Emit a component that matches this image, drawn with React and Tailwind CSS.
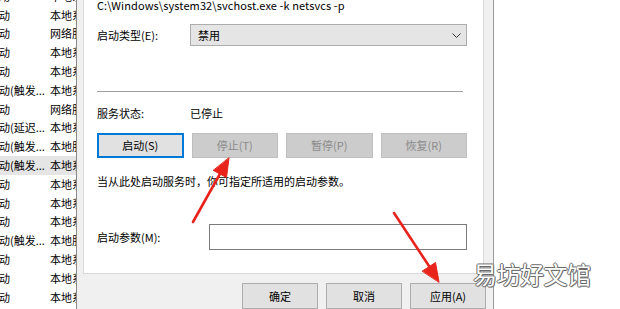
import React from "react";

const rows = [
  ["动", "本地系统"],
  ["动", "本地系统"],
  ["动", "网络服务"],
  ["动", "本地系统"],
  ["动", "本地系统"],
  ["动(触发...", "本地系统"],
  ["动", "网络服务"],
  ["动(延迟...", "本地系统"],
  ["动(触发...", "本地服务"],
  ["动(触发...", "本地系统", true],
  ["动", "本地系统"],
  ["动", "本地系统"],
  ["动", "本地系统"],
  ["动(触发...", "本地服务"],
  ["动", "本地系统"],
  ["动", "本地系统"],
  ["动", "本地系统"],
];

const ServiceList = () => (
  <div className="w-[77px] shrink-0 h-full overflow-hidden border-r border-[#8a8a8a] bg-white">
    <div className="-mt-[13px]">
      {rows.map(([start, account, active], i) => (
        <div
          key={i}
          className={`flex items-center h-[18.8px] text-[11px] leading-none text-black whitespace-nowrap ${
            active ? "bg-[#e5e5e5]" : ""
          }`}
        >
          <span className="w-[51px] shrink-0 -ml-[1px]">{start}</span>
          <span>{account}</span>
        </div>
      ))}
    </div>
  </div>
);

const Chevron = () => (
  <svg width="9" height="5" viewBox="0 0 9 5" className="text-[#333]">
    <path d="M0.5 0.5 L4.5 4.5 L8.5 0.5" fill="none" stroke="currentColor" strokeWidth="1" />
  </svg>
);

const ActionButton = ({ label, primary }) => (
  <div
    className={`h-[25px] flex items-center justify-center text-[11px] ${
      primary
        ? "bg-[#e1e1e1] border-2 border-[#0078d7] text-black"
        : "bg-[#cccccc] border border-[#bfbfbf] text-[#8a8a8a]"
    }`}
  >
    {label}
  </div>
);

const FooterButton = ({ label }) => (
  <div className="w-[76px] h-[26px] flex items-center justify-center bg-[#e1e1e1] border border-[#adadad] text-[11px] text-black">
    {label}
  </div>
);

const Arrows = () => (
  <svg className="absolute inset-0 pointer-events-none" width="620" height="309" viewBox="0 0 620 309">
    <g fill="#e8231b" stroke="#e8231b" strokeLinecap="round">
      <line x1="193" y1="222" x2="221" y2="172" strokeWidth="2.6" />
      <polygon points="229,158 226.5,177.5 213.5,170.5" strokeWidth="1" />
      <line x1="394" y1="213" x2="429" y2="266" strokeWidth="2.6" />
      <polygon points="439,282 435.5,262.5 422.5,271" strokeWidth="1" />
    </g>
  </svg>
);

export default function App() {
  return (
    <div className="relative w-[620px] h-[309px] overflow-hidden flex bg-white font-['Noto_Sans_CJK_SC','Noto_Sans',sans-serif] text-black">
      <ServiceList />

      {/* 属性对话框 */}
      <div className="w-[417px] shrink-0 h-full bg-[#f0f0f0] border-r border-[#9a9a9a] flex flex-col">
        <div className="ml-[6px] w-[401px] h-[274px] bg-white border border-[#d9d9d9] border-t-0 pl-[13px] pr-[16px] flex flex-col text-[11px]">
          <div className="-mt-[3px] h-[16px] leading-[16px] whitespace-nowrap tracking-[0.1px]">
            C:\Windows\system32\svchost.exe -k netsvcs -p
          </div>

          <div className="mt-[11px] flex items-center">
            <span className="w-[93px] shrink-0">启动类型(E):</span>
            <div className="flex-1 h-[22px] bg-[#e5e5e5] border border-[#adadad] flex items-center justify-between pl-[7px] pr-[5px]">
              <span>禁用</span>
              <Chevron />
            </div>
          </div>

          <div className="mt-[45px] h-px bg-[#a0a0a0] mr-[4px]" />

          <div className="mt-[13px] flex items-center h-[16px]">
            <span className="w-[93px] shrink-0">服务状态:</span>
            <span>已停止</span>
          </div>

          <div className="mt-[12px] grid grid-cols-4 gap-[8px]">
            <ActionButton label="启动(S)" primary />
            <ActionButton label="停止(T)" />
            <ActionButton label="暂停(P)" />
            <ActionButton label="恢复(R)" />
          </div>

          <div className="mt-[15px] h-[16px] leading-[16px]">当从此处启动服务时，你可指定所适用的启动参数。</div>

          <div className="mt-[35px] flex items-center">
            <span className="w-[112px] shrink-0">启动参数(M):</span>
            <div className="flex-1 h-[26px] bg-white border border-[#7a7a7a]" />
          </div>
        </div>

        <div className="mt-[9px] flex justify-end gap-[8px] pr-[7px]">
          <FooterButton label="确定" />
          <FooterButton label="取消" />
          <FooterButton label="应用(A)" />
        </div>
      </div>

      <div className="flex-1 h-full bg-white" />

      <Arrows />

      <div className="absolute left-[473px] top-[259px] text-[24px] leading-[30px] tracking-[-0.5px] text-white [text-shadow:1px_0_#6a6a6a,-1px_0_#6a6a6a,0_1px_#6a6a6a,0_-1px_#6a6a6a,1px_1px_#8a8a8a]">
        易坊好文馆
      </div>
    </div>
  );
}
